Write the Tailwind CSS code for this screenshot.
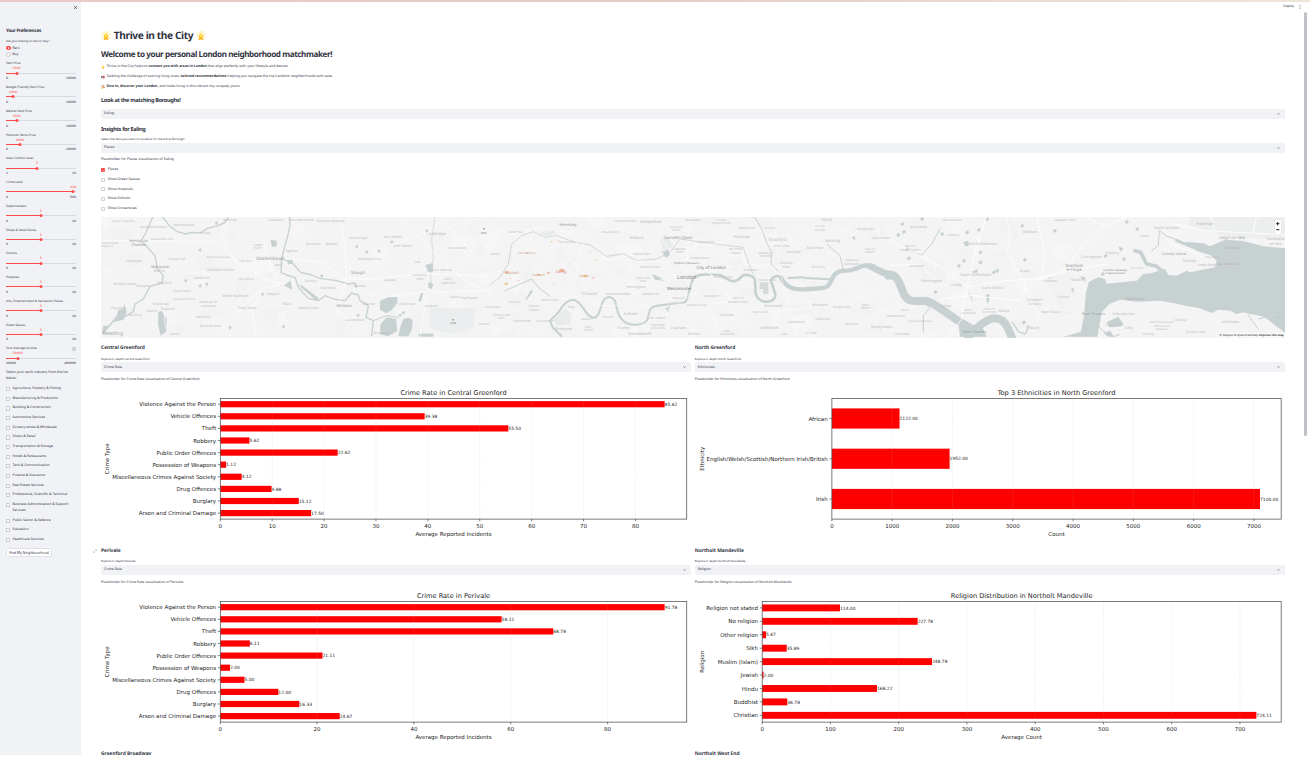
<!DOCTYPE html>
<html lang="en">
<head>
<meta charset="utf-8">
<title>Thrive in the City</title>
<script src="https://cdn.jsdelivr.net/npm/@tailwindcss/browser@4"></script>
</head>
<body class="bg-white">
<div class="h-[757px] w-[1310px] overflow-hidden bg-white font-['Noto_Sans',sans-serif] text-[#31333f] [text-rendering:geometricPrecision]">
  <div class="h-[2px] bg-linear-to-r from-[#ecc9ca] via-[#e5cdc4] to-[#efe6da]"></div>
  <div class="flex h-[753px] overflow-hidden">
    <aside class="w-[81px] shrink-0 bg-[#f0f2f6] pl-[6px] pr-[4px]">
      <div class="flex h-[24px] justify-end pt-[4px]">
        <svg class="size-[3px]" viewBox="0 0 6 6" stroke="#31333f" stroke-width="1.6"><path d="M.5.5l5 5M5.5.5l-5 5"/></svg>
      </div>
      <h2 class="flex h-[10px] items-center whitespace-nowrap pt-[1.6px] text-[4.7px] font-bold tracking-[-0.3px]">Your Preferences</h2>
      <p class="flex h-[9px] items-center whitespace-nowrap pt-[1px] text-[3px]">Are you looking to rent or buy?</p>
      <div class="flex h-[6.3px] items-center gap-[1.6px] text-[3.5px]"><span class="flex size-[4.6px] items-center justify-center rounded-full bg-[#ff4b4b]"><i class="size-[1.6px] rounded-full bg-white"></i></span>Rent</div>
      <div class="flex h-[6.3px] items-center gap-[1.6px] text-[3.5px]"><span class="size-[4.6px] rounded-full border-[0.7px] border-[#c9cbd1] bg-white"></span>Buy</div>
      <div id="sliders" class="pt-[3.5px]"></div>
      <p class="h-[16.3px] whitespace-nowrap pt-[0.6px] text-[3.47px] leading-[6px]">Select your work industry from the list<br>below:</p>
      <div id="industries"></div>
      <button class="mt-[1.2px] flex h-[9px] w-[46px] items-center justify-center whitespace-nowrap rounded-[1.5px] border border-[#dfe0e5] bg-white text-[3.45px]">Find My Neighbourhood</button>
    </aside>

    <main class="w-[1229px] shrink-0">
      <div class="flex h-[9px] items-center justify-end gap-[5px] pr-[9px] text-[3.3px]">Deploy
        <svg class="h-[4px] w-[2px]" viewBox="0 0 2 4" fill="#31333f"><circle cx="1" cy=".5" r=".45"/><circle cx="1" cy="2" r=".45"/><circle cx="1" cy="3.5" r=".45"/></svg>
      </div>
      <div class="flex">
        <div class="w-[1203.6px] shrink-0 pl-[20px]">
          <h1 class="mt-[18px] flex h-[13px] items-center gap-[2.8px] whitespace-nowrap text-[10.2px] font-bold tracking-[-0.4px]">
            <svg class="size-[10px]" viewBox="0 0 20 20"><use href="#star"/></svg><span>Thrive in the City</span><svg class="size-[10px]" viewBox="0 0 20 20"><use href="#star"/></svg>
          </h1>
          <h2 class="mt-[6.8px] flex h-[12px] items-center whitespace-nowrap text-[8.1px] font-bold tracking-[-0.4px]">Welcome to your personal London neighborhood matchmaker!</h2>
          <div class="mt-[1.2px] whitespace-nowrap text-[3.48px]">
            <p class="flex h-[10px] items-center gap-[1.2px]"><svg class="size-[4.2px]" viewBox="0 0 20 20"><use href="#star"/></svg><span>Thrive in the City helps to <b>connect you with areas in London</b> that align perfectly with your lifestyle and desires.</span></p>
            <p class="flex h-[10px] items-center gap-[1.2px]"><svg class="size-[4.2px]" viewBox="0 0 20 20"><path fill="#555a66" d="M1 5h10v10H1z"/><path fill="#d4464d" d="M9 4h8v12H9z"/><path fill="#f5e9e5" d="M6 7h4v6H6z"/></svg><span>Tackling the challenge of soaring living costs, <b>tailored recommendations</b> helping you navigate the city's eclectic neighborhoods with ease.</span></p>
            <p class="flex h-[10px] items-center gap-[1.2px]"><svg class="size-[4.2px]" viewBox="0 0 20 20"><path fill="#e9a63c" d="M1 19L7 5l8 8z"/><path fill="#4e6ca8" d="M2 2h4v5H2z"/><path fill="#d2613f" d="M10 1h5v6h-5z"/><path fill="#8b4b3b" d="M14 9h4v4h-4z"/></svg><span><b>Dive in, discover your London</b>, and make living in this vibrant city uniquely yours.</span></p>
          </div>
          <h3 class="mt-[3px] flex h-[10.6px] items-center whitespace-nowrap text-[5.6px] font-bold tracking-[-0.33px]">Look at the matching Boroughs!</h3>
          <div class="mt-[3.4px] flex h-[9.6px] items-center justify-between rounded-[1.6px] bg-[#f0f2f6] pl-[3px] pr-[4.4px] text-[3.5px]">Ealing<svg class="h-[2px] w-[3px]" viewBox="0 0 6 4" fill="none" stroke="#31333f"><path d="M.8.8L3 3 5.200.8"/></svg></div>
          <h3 class="mt-[4.9px] flex h-[10.5px] items-center whitespace-nowrap text-[5.6px] font-bold tracking-[-0.33px]">Insights for Ealing</h3>
          <p class="mt-[2.8px] flex h-[5px] items-center whitespace-nowrap text-[3px]">Select the data you want to visualize for the entire Borough:</p>
          <div class="mt-[1.2px] flex h-[9.7px] items-center justify-between rounded-[1.6px] bg-[#f0f2f6] pl-[3px] pr-[4.4px] text-[3.5px]">Places<svg class="h-[2px] w-[3px]" viewBox="0 0 6 4" fill="none" stroke="#31333f"><path d="M.8.8L3 3 5.200.8"/></svg></div>
          <p class="mt-[2.3px] flex h-[10px] items-center whitespace-nowrap text-[3.5px]">Placeholder for Places visualisation of Ealing</p>
          <div id="layers" class="pt-[0.3px]"></div>
          <div class="relative mt-[3.8px] h-[120.5px]">
            <svg id="map" class="block h-full w-full" viewBox="0 0 1183.6 120.5" preserveAspectRatio="none"></svg>
            <div class="absolute right-[3.5px] top-[2.5px] flex h-[14px] w-[6.5px] flex-col items-center justify-evenly rounded-[1px] bg-white shadow-[0_0_1px_#aaa]">
              <svg class="size-[3.4px]" viewBox="0 0 6 6" stroke="#222" stroke-width="1.7"><path d="M0 3h6M3 0v6"/></svg>
              <svg class="size-[3.4px]" viewBox="0 0 6 6" stroke="#222" stroke-width="1.7"><path d="M0 3h6"/></svg>
            </div>
            <div class="absolute bottom-[0.5px] right-[1px] flex h-[4px] items-center gap-[1px] whitespace-nowrap bg-white/50 text-[2.8px] text-[#333]"><span>© Mapbox © OpenStreetMap</span><b>Improve this map</b></div>
          </div>
          <div id="areas" class="mt-[5.6px] grid grid-cols-2 gap-x-[3.9px]"></div>
        </div>
        <div class="flex w-[25.4px] justify-end pr-[3.4px]"><div class="mt-px h-[424px] w-[3px] rounded-full bg-[#c0c1c6]"></div></div>
      </div>
    </main>
  </div>
</div>

<svg class="hidden">
  <symbol id="star" viewBox="0 0 20 20">
    <path stroke="#fadb75" stroke-width="1.700" d="M10 0v4M4.500 1l2 3.500M15.500 1l-2 3.500M.3 5.500l4 2M19.700 5.500l-4 2M.3 12.500h3M19.700 12.500h-3"/>
    <path fill="#fbb92a" d="M10 5l2 3.200 4 1-2.500 3 2 6.300-5.500-1.700-5.500 1.700 2-6.300L4 9.200l4-1z"/>
    <path fill="#ffe04f" d="M10 4.500a4 4 0 0 1 4 4 4 4 0 0 1-8 0 4 4 0 0 1 4-4z"/>
  </symbol>
</svg>

<script>
const sliders = [
  ['Rent Price', '1500', '0', '10000', 15], ['Budget-Friendly Rent Price', '1000', '0', '10000', 10],
  ['Median Rent Price', '1500', '0', '10000', 15], ['Premium Rents Price', '2000', '0', '10000', 20],
  ['Area Comfort Level', '5', '1', '10', 44.4], ['Crime Level', '480', '0', '500', 96],
  ['Supermarkets', '5', '0', '10', 50], ['Shops & Retail Stores', '5', '0', '10', 50],
  ['Schools', '5', '0', '10', 50], ['Hospitals', '5', '0', '10', 50],
  ['Arts, Entertainment & Recreation Places', '5', '0', '10', 50], ['Green Spaces', '5', '0', '10', 50],
  ['Your Average Income', '50000', '20000', '200000', 16.7]
];
document.getElementById('sliders').innerHTML = sliders.map(([name, val, lo, hi, pct], i) => `
  <div class="h-[23.76px] w-[70px]">
    <div class="flex h-[5px] items-center justify-between whitespace-nowrap text-[3.05px]">${name}${i === 12 ? '<svg class="size-[4px]" viewBox="0 0 10 10" fill="none" stroke="#8b8d96"><circle cx="5" cy="5" r="4.300"/><path d="M3.700 4a1.300 1.300 0 1 1 1.800 1.200L5 6M5 7v1"/></svg>' : ''}</div>
    <div class="relative h-[5.4px]"><span class="absolute top-[0.4px] -translate-x-1/2 font-['Liberation_Mono',monospace] text-[3.3px] leading-[5px] text-[#ff4b4b]" style="left:${pct}%">${val}</span></div>
    <div class="relative flex h-[3.2px] items-center"><div class="h-[0.9px] w-full bg-[#d5dae5]"><div class="h-full bg-[#ff4b4b]" style="width:${pct}%"></div></div>
      <i class="absolute size-[3px] -translate-x-1/2 rounded-full bg-[#ff4b4b]" style="left:${pct}%"></i></div>
    <div class="flex h-[8px] items-center justify-between font-['Liberation_Mono',monospace] text-[3.3px]"><span>${lo}</span><span>${hi}</span></div>
  </div>`).join('');

const industries = ['Agriculture, Forestry & Fishing', 'Manufacturing & Production', 'Building & Construction', 'Automotive Services', 'Grocery stores & Wholesale', 'Shops & Retail', 'Transportation & Storage', 'Hotels & Restaurants', 'Tech & Communication', 'Finance & Insurance', 'Real Estate Services', 'Professional, Scientific & Technical', 'Business Administration & Support<br>Services', 'Public Sector & Defence', 'Education', 'Healthcare Services'];
document.getElementById('industries').innerHTML = industries.map(t => `
  <div class="flex gap-[2.4px] pb-[3.66px] text-[3.42px] leading-[6px] whitespace-nowrap"><span class="mt-[0.9px] size-[4.2px] shrink-0 rounded-[0.8px] border-[0.7px] border-[#c9cbd1] bg-white"></span><span>${t}</span></div>`).join('');

document.getElementById('layers').innerHTML = ['Places', 'Show Green Spaces', 'Show Hospitals', 'Show Schools', 'Show Universities'].map((t, i) => `
  <div class="flex h-[9.68px] items-center gap-[2.6px] whitespace-nowrap text-[3.5px]">${i === 0
    ? '<span class="flex size-[4.2px] items-center justify-center rounded-[0.8px] bg-[#ff4b4b]"><svg class="size-[3px]" viewBox="0 0 6 6" fill="none" stroke="#fff"><path d="M1 3l1.500 1.500L5 1.500"/></svg></span>'
    : '<span class="size-[4.2px] rounded-[0.8px] border border-[#d0d2d8] bg-white"></span>'}<span>${t}</span></div>`).join('');

/* ---- bar charts ---- */
const crimes = ['Violence Against the Person', 'Vehicle Offences', 'Theft', 'Robbery', 'Public Order Offences', 'Possession of Weapons', 'Miscellaneous Crimes Against Society', 'Drug Offences', 'Burglary', 'Arson and Criminal Damage'];
function chart(c) {
  const top = 399, bottom = 519.6;
  let s = '';
  const T = (x, y, t, size, anchor, extra = '') => `<text x="${x}" y="${y + size * 0.38}" font-size="${size}" text-anchor="${anchor}" ${extra}>${t}</text>`;
  c.labels.forEach((l, i) => {
    const y = c.y0 + i * c.pitch, w = c.values[i] * c.unit;
    s += `<rect x="${c.x0}" y="${y - c.bar / 2}" width="${w}" height="${c.bar}" fill="#f00"/>`;
    s += `<path d="M${c.x0 - 2.4} ${y}H${c.x0}" stroke="#333" stroke-width=".6"/>`;
    s += T(c.x0 - 4.2, y, l, 5.5, 'end') + T(c.x0 + w, y, c.values[i].toFixed(2), 4.45, 'start');
  });
  for (let v = 0; v * c.unit < c.x1 - c.x0; v += c.step) {
    const x = c.x0 + v * c.unit;
    if (v) s += `<path d="M${x} ${top}V${bottom}" stroke="#b0b0b0" stroke-opacity=".3" stroke-width=".6" stroke-dasharray="1.500 .7"/>`;
    s += `<path d="M${x} ${bottom}v2.200" stroke="#333" stroke-width=".6"/>` + T(x, 526, v, 5.5, 'middle');
  }
  s += `<rect x="${c.x0}" y="${top}" width="${c.x1 - c.x0}" height="${bottom - top}" fill="none" stroke="#444" stroke-width=".7"/>`;
  const mid = (c.x0 + c.x1) / 2;
  s += T(mid, 393, c.title, 6.6, 'middle') + T(mid, 534, c.xlabel, 5.5, 'middle');
  s += `<g transform="translate(${c.yx} 459.300) rotate(-90)">${T(0, 0, c.ylabel, 5.5, 'middle')}</g>`;
  return `<svg class="block h-[161.5px] w-full font-['DejaVu_Sans',sans-serif]" fill="#222" viewBox="${c.vx} 384.500 589.900 161.500" preserveAspectRatio="none">${s}</svg>`;
}
const L = { vx: 101, x0: 220.3, x1: 686.8, yx: 107, y0: 404.7, pitch: 12.1, bar: 6.2, labels: crimes, ylabel: 'Crime Type', xlabel: 'Average Reported Incidents' };
const R = { vx: 694.8, x1: 1281, yx: 701.5 };
const areas = [
  ['Central Greenford', 'Crime Rate', { ...L, unit: 5.19, step: 10, title: 'Crime Rate in Central Greenford', values: [85.62, 39.38, 55.5, 5.62, 22.62, 1.12, 4.12, 9.88, 15.12, 17.5] }],
  ['North Greenford', 'Ethnicities', { ...R, x0: 831.7, y0: 419, pitch: 40.25, bar: 20.2, unit: 0.0603, step: 1000, title: 'Top 3 Ethnicities in North Greenford', xlabel: 'Count', ylabel: 'Ethnicity', labels: ['African', 'English/Welsh/Scottish/Northern Irish/British', 'Irish'], values: [1122, 1952, 7100] }],
  ['Perivale', 'Crime Rate', { ...L, unit: 4.842, step: 20, title: 'Crime Rate in Perivale', values: [91.78, 58.11, 68.78, 6.11, 21.11, 2, 5, 12, 16.33, 24.67] }],
  ['Northolt Mandeville', 'Religion', { ...R, x0: 762, y0: 405.4, pitch: 13.43, bar: 6.9, unit: 0.6825, step: 100, title: 'Religion Distribution in Northolt Mandeville', xlabel: 'Average Count', ylabel: 'Religion', labels: ['Religion not stated', 'No religion', 'Other religion', 'Sikh', 'Muslim (Islam)', 'Jewish', 'Hindu', 'Buddhist', 'Christian'], values: [114, 227.78, 5.67, 35.89, 248.78, 2, 168.22, 36.78, 724.11] }],
  ['Greenford Broadway'], ['Northolt West End']
];
document.getElementById('areas').innerHTML = areas.map(([name, kind, c]) => `
  <section class="relative h-[202.67px]">
    ${name === 'Perivale' ? '<svg class="absolute -left-[8.5px] top-[3px] size-[4px]" viewBox="0 0 10 10" fill="none" stroke="#9a9ca5" stroke-width="1.200"><path d="M4 6l2-2M5 2.500L6.500 1a1.800 1.800 0 0 1 2.500 2.500L7 5.500M5 7.500L3.500 9A1.800 1.800 0 0 1 1 6.500L3 4.500"/></svg>' : ''}
    <h4 class="flex h-[10px] items-center whitespace-nowrap pt-[1.4px] text-[4.9px] font-bold">${name}</h4>
    ${c ? `<p class="mt-[2.8px] flex h-[5px] items-center whitespace-nowrap text-[2.95px]">Explore in depth ${name}</p>
    <div class="mt-[1.2px] flex h-[9.6px] items-center justify-between rounded-[1.6px] bg-[#f0f2f6] pl-[3px] pr-[4.4px] text-[3.5px]">${kind}<svg class="h-[2px] w-[3px]" viewBox="0 0 6 4" fill="none" stroke="#31333f"><path d="M.8.8L3 3 5.200.8"/></svg></div>
    <p class="mt-[2.4px] flex h-[10px] items-center whitespace-nowrap text-[3.45px]">Placeholder for ${kind} visualisation of ${name}</p>${chart(c)}` : ''}
  </section>`).join('');

/* ---- map: three panels, each drawn at 3x in its own coordinates ---- */
const water = '#c8d1d2';
const P = (d, w, col = water) => `<path d="${d}" fill="none" stroke="${col}" stroke-width="${w}" stroke-linejoin="round" stroke-linecap="round"/>`;
const F = (d, col = water) => `<path d="${d}" fill="${col}"/>`;
const texts = a => a.map(([x, y, t, s = 10, f = '#bbbdbd']) => `<text x="${x}" y="${Math.min(Math.max(y, 32), 376) + s * .35}" font-size="${s}" fill="${f}" text-anchor="middle">${t}</text>`).join('');
let seed = 11;
const rnd = () => (seed = (seed * 16807) % 2147483647) / 2147483647;
let base = '<rect width="1184" height="121" fill="#f3f4f3"/>';
for (let i = 0; i < 150; i++) {
  const x = rnd() * 960, y = rnd() * 118, w = 5 + rnd() * 18, h = 3 + rnd() * 12;
  base += F(`M${x} ${y}l${w} ${-h / 3}l${w / 3} ${h}l${-w} ${h / 2}z`, i % 3 ? '#f1f2f1' : '#f5f6f5');
}
for (let i = 0; i < 150; i++) {
  const x = 330 + rnd() * 560, y = rnd() * 120, a = rnd() * 60 - 30, b = rnd() * 40 - 20;
  base += P(`M${x} ${y}q${a / 2} ${b} ${a} ${b}t${a / 2} ${-b / 2}`, .5, '#fafafa');
}
const west = P('M190 20L168 70L154 95L195 140L202 180L220 200L215 222L180 232L160 270L135 285L130 308L100 325', 4)
  + P('M215 20L238 50L262 68L288 75L305 70L330 72L352 58L385 50L405 40L420 20', 4)
  + P('M598 20L600 50L592 85L582 120L575 150L573 190L590 198L615 205L625 235L655 268L685 275L705 260L730 270L765 275L785 252L805 258L810 275L835 290L828 325L850 335L845 380', 4)
  + P('M580 150L610 165L632 190L665 198L690 208L740 215L775 225L795 222L800 238', 4)
  + P('M1035 20L1025 90L1030 150L1020 180L1025 230', 2)
  + P('M850 335L890 320L925 325', 3)
  + F('M625 228L637 230L687 268L680 276z') + F('M580 228L602 215L607 242z') + F('M542 92L560 95L560 112L545 114z') + F('M590 152L609 154L607 164L595 166z')
  + F('M870 276L895 264L922 264L922 282L905 304L888 312L870 302z') + F('M940 330L955 326L968 333L966 360L955 382H925L932 350z')
  + F('M872 345L890 325L918 330L922 365L895 382L870 375z') + F('M40 350L55 350L80 320L85 302L100 300L103 284L110 310L100 332L70 340L40 375L36 372z') + F('M205 308L215 306L230 330L228 368L212 380L204 345z')
  + F('M993 252L1000 249L993 278L985 275z') + F('M985 374H1030V383H985z') + F('M1006 168L1030 162L1028 190L1014 188z') + F('M1015 220L1030 225L1025 240L1015 236z')
  + F('M1020 298H1152V356L1085 374L1018 358z', '#ebeeee')
  + [[325, 122], [900, 98], [795, 112], [282, 214], [325, 230], [345, 225], [415, 355], [575, 352], [799, 318], [690, 200], [925, 318], [374, 42], [1005, 65], [512, 255], [825, 128], [862, 126], [935, 310]].map(([x, y]) => F(`M${x} ${y}l7 -5l3 6l-5 6z`)).join('')
  + P('M32 95H154L380 98L430 150L540 218L590 225', 2, '#fff') + P('M75 20L150 95M420 20L395 90L440 165M520 95L545 180L570 228L525 235L470 280L390 370M590 150L700 160L760 210L850 210L1000 195L1200 200M750 20L765 110L770 210L740 310M920 20L990 85L1040 140L1130 220L1200 250M790 235L880 265L1000 250L1200 245M1010 260L990 383M740 300L830 383M220 265L225 350L260 383M520 240L485 300L500 383M1050 20L1100 80L1200 190', 2, '#fff') + P('M800 220L900 110L1010 70L1200 20', 1.5, '#fff')
  + texts([[100, 37, 'Lower Assendon', 9], [178, 54, 'Remenham'], [218, 54, 'Aston'], [282, 47, 'Medmenham'], [346, 73, 'Hurley'], [420, 26, 'Marlow', 11], [558, 23, 'Cookham'], [634, 24, 'Burnham Wood', 10], [722, 37, 'Farnham Beeches', 10], [146, 94, 'Henley on', 12, '#999'], [146, 107, 'Thames', 12, '#999'], [60, 101, 'Rotherfield', 9], [50, 112, 'Peppard', 9], [215, 90, 'Remenham Hill', 9], [132, 156, 'Harpsden'], [260, 149, 'Crazies Hill', 10], [386, 143, 'Burchett\'s Green', 9], [504, 107, 'FURZE', 8], [504, 118, 'PLATT', 8], [540, 147, 'Maidenhead', 14, '#999'], [604, 125, 'Taplow', 11], [670, 105, 'Burnham'], [725, 106, 'Britwell'], [806, 88, 'Stoke Poges', 10], [908, 84, 'Iver Heath', 11], [938, 111, 'Iver Heath', 11], [1042, 75, 'Uxbridge', 12], [1102, 117, 'HILLINGDON', 9], [840, 149, 'Wexham Court', 10], [804, 190, 'Slough', 13, '#999'], [983, 158, 'Iver'], [1056, 184, 'WEST DRAYTON', 8], [210, 174, 'Wargrave', 12, '#999'], [208, 184, 'Marsh', 11], [390, 182, 'Littlewick Green', 11], [466, 157, 'HIGHWAY', 8], [565, 168, 'BRAY', 8], [104, 226, 'Binfield Heath', 10], [158, 230, 'Shiplake'], [222, 221, 'Twyford', 11], [336, 206, 'Knowl Hill', 10], [468, 210, 'COX GREEN', 9], [662, 217, 'Dorney', 10], [714, 238, 'Eton Wick', 10], [808, 232, 'Datchet', 10], [900, 213, 'Langley'], [989, 198, 'RICHINGS', 9], [989, 209, 'PARK', 9], [1075, 211, 'WEST', 9], [1075, 222, 'DRAYTON', 9], [276, 245, 'Hare Hatch', 10], [283, 269, 'Castle End Farm', 9], [436, 259, 'White Waltham', 11], [550, 254, 'Holyport', 10], [212, 286, 'Ruscombe', 10], [232, 300, 'Twyford', 11], [355, 280, 'Waltham St', 10], [355, 291, 'Lawrence', 10], [472, 296, 'Paley Street', 10], [590, 285, 'Fifield'], [655, 298, 'Oakley Green', 10], [763, 291, 'Windsor', 12, '#999'], [836, 284, 'Datchet'], [950, 284, 'Colnbrook', 10], [1095, 265, 'Sipson', 10], [1138, 267, 'Harlington', 10], [1022, 292, 'Longford'], [86, 298, 'Playhatch', 10], [135, 319, 'Sonning'], [185, 307, 'Charvil'], [340, 324, 'West End', 10], [360, 352, 'Shurlock Row', 10], [68, 371, 'Reading', 16, '#aaa'], [254, 376, 'Hurst'], [795, 334, 'OLD WINDSOR', 8], [875, 373, 'Wraysbury', 10], [1182, 71, 'NHT', 9, '#666'], [1089, 343, 'LHR', 9, '#666'], [1182, 344, 'Hatton', 10], [1182, 60, '✈', 9, '#555'], [1089, 332, '✈', 9, '#555']]);
const mid = P('M0 228L30 205L55 165L65 105L95 80L130 68L165 85L200 80L250 98L300 108L350 142L400 134L440 155L500 150L540 130L570 90L640 100L760 115L780 175L790 195', 2.5)
  + P('M215 382L188 355L180 335L205 310C225 280 235 272 252 272C280 280 285 325 312 326C338 322 325 265 360 264C388 270 370 310 400 335C415 352 465 352 473 330C478 305 480 292 500 290L585 280C600 260 595 240 607 215', 6)
  + P('M607 215C615 190 655 197 690 198C720 215 730 225 752 206C760 190 795 200 795 215L797 255C810 290 860 282 856 255L846 225C835 205 865 195 872 205', 8)
  + P('M872 205C895 250 930 242 985 238C1040 240 1010 190 1060 185C1100 190 1110 160 1150 172', 13) + P('M1140 172C1165 180 1170 193 1205 196', 20)
  + P('M765 20L795 25L815 60L830 100L845 130L843 165L870 190M1010 105L1050 140L1060 180', 3) + P('M895 207L940 205M945 207L1018 211', 6) + P('M45 245L125 210L150 240L180 262M125 245L108 272', 3)
  + F('M486 194L518 210L520 216L495 212z') + F('M515 128L535 120L540 138L528 146z') + F('M810 220H835V255H820V240H808z', '#d4dada') + F('M525 300L540 292L536 308z') + F('M1085 85L1095 82L1095 95z') + F('M120 245L130 246L108 275z')
  + F('M190 330L225 300L245 315L240 345L200 350z', '#e9ebeb') + F('M508 90L530 82L550 110L520 130z', '#eaecec') + F('M150 68L195 62L200 80L160 84z', '#ebecec')
  + P('M0 60L60 75L150 55L240 70L330 150L530 160L620 110L720 100L800 60L930 120L1030 90L1205 60M220 20L270 120L250 260L330 290L480 290L620 250L720 270L830 310L1000 290L1205 240M20 383L120 290L240 265L400 245L520 210L600 190L780 165L900 180L1000 110L1120 20M480 20L540 130L640 240L690 383M600 20L590 150L700 220L760 383M850 20L870 190L920 383M1030 240L1100 300L1205 383M640 170L740 290L950 340M400 383L520 310L650 230', 2, '#fbfbfb')
  + [[50, 190, 8], [48, 225, 7], [175, 192, 5], [215, 185, 11], [285, 202, 9], [145, 198, 6], [112, 133, 5], [185, 98, 4], [205, 96, 3], [300, 130, 3], [317, 153, 4], [85, 215, 3], [240, 165, 3], [138, 150, 3], [310, 207, 4], [60, 208, 3], [190, 225, 3], [230, 235, 2], [120, 53, 2], [262, 235, 2]].map(([x, y, r], i) => F(`M${x - r} ${y}l${r} ${-r * .6}l${r} ${r * .4}l${-r * .8} ${r * .6}z`, ['#f0b49a', '#f3c58e', '#ef9a8c'][i % 3])).join('')
  + texts([[234, 47, 'Wembley', 12, '#999'], [405, 35, 'CRICKLEWOOD', 9], [482, 37, 'Hampstead', 12], [608, 33, 'HOLLOWAY', 9], [695, 32, 'STOKE', 9], [695, 42, 'NEWINGTON', 9], [360, 70, 'WILLESDEN', 9], [440, 86, 'Kilburn', 12], [564, 85, 'Camden Town', 13, '#999'], [558, 53, 'KENTISH', 9], [558, 63, 'TOWN', 9], [755, 82, 'Hackney', 12], [863, 90, 'Stratford', 13], [770, 57, 'HOMERTON', 9], [840, 56, 'LEYTON', 9], [990, 52, 'LITTLE', 9], [990, 62, 'ILFORD', 9], [1010, 30, 'Ilford', 12], [1028, 96, 'Barking', 12], [1128, 60, 'BECONTREE', 9], [1172, 88, 'DAGENHAM', 9], [648, 98, 'ISLINGTON', 9], [975, 117, 'East Ham', 11], [1140, 120, 'CASTLE', 9], [1140, 130, 'GREEN', 9], [78, 70, 'NORTHOLT', 9], [232, 99, 'ALPERTON', 9], [110, 132, 'GREENFORD', 9, '#d0aca4'], [455, 134, 'MAIDA VALE', 9], [568, 120, 'CAMDEN', 9], [568, 130, 'TOWN', 9], [738, 121, 'BETHNAL', 9], [738, 131, 'GREEN', 9], [826, 131, 'BROMLEY', 9], [826, 142, 'BY BOW', 9], [910, 128, 'PLAISTOW', 9], [875, 112, 'WEST HAM', 9], [630, 148, 'CLERKENWELL', 9], [15, 135, 'HAYES', 9], [65, 190, 'Southall', 11, '#d09a8a'], [213, 187, 'Ealing', 11, '#d58a80'], [145, 198, 'Hanwell', 10, '#d0a488'], [282, 201, 'Acton', 10, '#c9a588'], [590, 163, 'Holborn Museum', 9, '#888'], [664, 176, 'City of London', 13, '#777'], [590, 204, 'London', 16, '#888'], [568, 238, 'Westminster', 12.5, '#777'], [480, 173, 'PADDINGTON', 9], [783, 184, 'SHADWELL', 9], [888, 163, 'CANNING', 9], [888, 173, 'TOWN', 9], [985, 174, 'BECKTON', 9], [1086, 154, 'BARKING', 9], [1086, 164, 'RIVERSIDE', 9], [460, 207, 'NOTTING', 9], [460, 217, 'HILL', 9], [438, 232, 'Kensington', 11], [832, 213, 'ISLE OF DOGS', 8], [700, 203, 'BERMONDSEY', 9], [300, 255, 'Chiswick', 11], [384, 255, 'Hammersmith', 11], [482, 256, 'BROMPTON', 9], [667, 262, 'WALWORTH', 9], [745, 268, 'SOUTH', 9], [745, 278, 'BERMONDSEY', 9], [180, 273, 'BRENTFORD', 9], [73, 278, 'HESTON', 9], [565, 267, 'PIMLICO', 9], [132, 292, 'SPRING', 9], [132, 302, 'GROVE', 9], [8, 293, 'CRANFORD', 9], [244, 293, 'Kew', 10], [620, 288, 'KENNINGTON', 9], [850, 289, 'Greenwich', 11], [1055, 294, 'PLUMSTEAD', 9], [990, 287, 'Woolwich', 11], [1127, 288, 'WEST', 9], [1127, 298, 'HEATH', 9], [35, 317, 'HOUNSLOW', 9], [35, 327, 'WEST', 9], [422, 315, 'Fulham', 12], [710, 318, 'PECKHAM', 9], [812, 310, 'DEPTFORD', 9], [95, 336, 'Hounslow', 11], [165, 336, 'ISLEWORTH', 9], [290, 329, 'BARNES', 9], [355, 324, 'PUTNEY', 9], [502, 327, 'BATTERSEA', 9], [920, 338, 'KIDBROOKE', 9], [998, 330, 'SHOOTERS', 9], [1085, 346, 'WELLING', 9], [220, 359, 'Richmond', 11], [295, 353, 'EAST', 9], [295, 363, 'SHEEN', 9], [400, 356, 'Putney', 11], [450, 375, 'Wandsworth', 12], [503, 347, 'CLAPHAM', 9], [503, 357, 'JUNCTION', 9], [565, 357, 'Clapham', 11], [612, 375, 'Brixton', 11], [712, 365, 'EAST', 9], [712, 375, 'DULWICH', 9], [838, 356, 'Lewisham', 12], [883, 377, 'Lee'], [963, 373, 'ELTHAM', 9], [1175, 352, 'Bexleyheath', 11]]);
const east = P('M-5 200C20 190 30 225 40 252C55 285 80 275 108 275C130 278 170 315 220 345L262 368', 24)
  + P('M235 383C270 345 295 328 315 328C345 330 350 350 365 383', 24) + F('M206 352L255 362L275 350L290 383H210z')
  + P('M368 340L385 368L405 375M415 350L408 372', 4) + P('M735 125L752 130L770 165L800 172L820 190', 11) + P('M785 125L805 110L808 65L830 82L870 95', 3) + P('M860 95L910 115L980 132', 9)
  + F('M520 383L573 368L582 320L588 250L597 218L625 205L645 210L650 224L740 215L760 195L785 192L825 180L835 198L860 200L890 185L900 190L975 175L980 155L965 140L920 125L885 98L940 103L960 112L1005 92L1060 96L1120 112L1186 118V372L1150 345L1125 325L1100 318L1080 315L1060 310L1040 315L1020 305L985 302L965 312L930 298L885 290L865 285L810 275L740 278L690 272L658 285L635 310L628 350L622 383z')
  + F('M658 355L650 340L685 323L693 335L700 345L695 352L672 354z') + P('M625 352L650 375M670 383L690 376M1075 318L1090 340L1105 360M1130 325L1105 330', 3) + F('M660 365L672 383H655L640 372z')
  + P('M150 60L125 105L95 138L65 130M100 370L100 320L120 295L105 285', 3)
  + F('M220 100L235 95L237 110L225 112z') + F('M287 258L298 255L298 272L292 285z') + F('M235 245L240 262L250 282L245 264z') + F('M543 240L553 236L548 252z') + F('M242 190L265 180L260 192z') + F('M570 202L588 205L580 214z') + F('M685 112L700 118L692 128z')
  + [[30, 45], [35, 68], [45, 120], [50, 148], [90, 30], [390, 50], [200, 170], [225, 70], [285, 30], [260, 62], [150, 75], [704, 38], [735, 60], [632, 195], [695, 150], [640, 140], [215, 155], [265, 160], [315, 185], [305, 190], [130, 248], [398, 152], [395, 340], [488, 65], [18, 78], [265, 130]].map(([x, y]) => F(`M${x} ${y}l8 -6l5 6l-7 7z`)).join('')
  + F('M895 22H1186V95L1000 80L900 50z', '#edefee') + P('M0 95L100 145L160 180L230 235L340 215L440 210L540 185L650 165M290 20L255 130L230 240L215 330L180 383M345 20L362 70L350 130L400 215L410 250L450 330M580 20L642 52L720 20M642 52L560 130L535 180L440 215M150 270L240 260L390 275L410 240M455 210L465 130L440 20M850 45L950 65L1184 78M1100 20L1090 70M960 20L975 65M0 170L90 165L130 210M820 80L850 110L900 125L950 150', 2.5, '#fff')
  + texts([[185, 28, 'COLLIER ROW', 9], [85, 53, 'DAGENHAM', 9], [190, 79, 'HAROLD', 9], [525, 32, 'Langdon Hills', 10], [420, 67, 'Bulphan', 11], [280, 104, 'North Ockendon', 11], [60, 112, 'SOUTH', 9], [60, 122, 'HORNCHURCH', 9], [604, 144, 'Corringham', 11], [667, 133, 'Fobbing', 10], [763, 82, 'PITSEA', 8], [830, 56, 'South Benfleet', 11], [945, 45, 'Hadleigh', 12], [1026, 86, 'Leigh on Sea', 13, '#a5a8a8'], [1156, 90, 'Southend', 11.5], [1156, 103, 'on Sea', 11.5], [852, 134, 'Canvey Island', 11, '#999'], [898, 155, 'Canvey', 12], [950, 168, 'Leigh Beck', 11], [1028, 116, 'Southend', 10, '#b9aaa8'], [1018, 165, 'Sea Reach No.1', 10, '#b9aaa8'], [968, 145, 'Hole Haven', 9], [552, 168, 'Stanford', 13, '#999'], [552, 181, 'le Hope', 13, '#999'], [80, 171, 'RAINHAM', 9], [404, 186, 'Orsett', 10], [257, 197, 'South Ockendon', 12], [675, 182, 'London Gateway', 9, '#888'], [675, 191, 'Logistics Park', 9, '#888'], [740, 178, 'Thurrock', 9], [125, 214, 'Wennington', 11], [200, 228, 'Aveley', 11], [308, 237, 'North Stifford', 10], [480, 207, 'THE', 8], [480, 217, 'HORNDON', 8], [565, 212, 'Mucking', 11], [434, 271, 'Chadwell', 11], [434, 283, 'St Mary', 11], [520, 264, 'Linford', 10], [736, 269, 'Blyth Sands', 10, '#aaa'], [165, 291, 'Purfleet', 10], [234, 302, 'WEST', 9], [234, 312, 'THURROCK', 9], [298, 300, 'SOUTH', 9], [298, 310, 'STIFFORD', 9], [342, 304, 'Grays', 12], [482, 310, 'West Tilbury', 10], [610, 314, 'River Thames', 11, '#97a4a4'], [700, 314, 'Cliffe Marshes', 10], [45, 304, 'ERITH', 9], [90, 336, 'Crayford Marshes', 9], [20, 322, 'BARNEHURST', 9], [815, 340, 'RSPB Northward', 9], [815, 350, 'Hill Nature', 9], [815, 360, 'Reserve', 9], [871, 334, 'Cooling', 10], [1022, 339, 'Allhallows', 11], [428, 355, 'Tilbury', 12], [254, 368, 'River Thames', 11, '#8b9999'], [670, 348, 'Cliffe Pools', 9], [716, 356, 'Cliffe', 10], [918, 368, 'St Mary Hoo', 10], [773, 380, 'Cooling', 10], [35, 382, 'CRAYFORD', 9], [1168, 325, 'Grain', 9]]);
document.getElementById('map').innerHTML = base + [[-11, west], [389, mid], [789, east]].map(([x, g]) => `<g transform="translate(${x} -8) scale(.33333)">${g}</g>`).join('');
</script>
</body>
</html>
